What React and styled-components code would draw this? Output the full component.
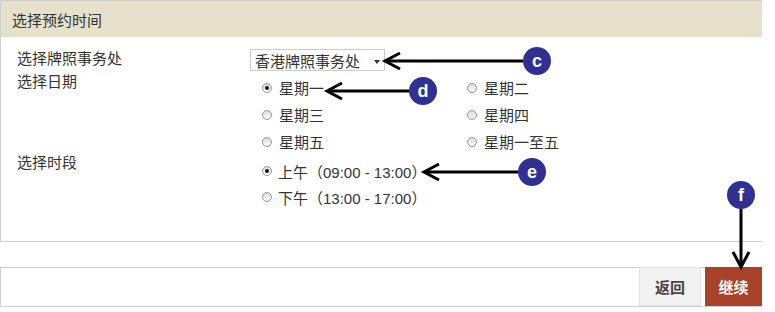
import React, { useState } from 'react';
import styled, { createGlobalStyle } from 'styled-components';

const GlobalStyle = createGlobalStyle`
    html, body {
        margin: 0;
        padding: 0;
        background: #fff;
    }
    body {
        font-family: "Liberation Sans", "Noto Sans CJK SC", sans-serif;
        color: #333;
        font-size: 15px;
        text-spacing-trim: space-all;
    }
`;

const Page = styled.div`
    position: relative;
    width: 775px;
    height: 312px;
    overflow: hidden;
`;

const Panel = styled.section`
    width: 762px;
    box-sizing: border-box;
    border-left: 1px solid #cfcfcf;
    border-bottom: 1px solid #cfcfcf;
`;

const PanelHeader = styled.h2`
    margin: 0;
    height: 36px;
    border-top: 1px solid #cfcfcf;
    background: #e6e1cb;
    padding-left: 11px;
    display: flex;
    align-items: center;
    font-size: 15px;
    font-weight: normal;
    color: #333;
`;

const PanelBody = styled.div`
    padding: 12px 0 31px 16px;
`;

const Field = styled.div`
    display: flex;
    align-items: flex-start;
`;

const Label = styled.div`
    width: 233px;
    flex: none;
    line-height: 16px;
    padding-top: ${(p) => p.offset || 0}px;
`;

const Select = styled.div`
    width: 135px;
    height: 22px;
    box-sizing: border-box;
    border: 1px solid #cccccc;
    display: flex;
    align-items: center;
    padding-left: 4px;
    position: relative;
    &::after {
        content: '';
        position: absolute;
        right: 4px;
        top: 10px;
        border-left: 3px solid transparent;
        border-right: 3px solid transparent;
        border-top: 4px solid #333;
    }
`;

const Options = styled.div`
    display: grid;
    grid-template-columns: ${(p) => (p.cols === 2 ? '205px 205px' : 'auto')};
    grid-auto-rows: ${(p) => p.rowHeight}px;
    padding-top: ${(p) => p.offset || 0}px;
    padding-left: 12px;
`;

const Option = styled.label`
    display: flex;
    align-items: center;
    gap: ${(p) => p.gap || 7}px;
    cursor: pointer;
    white-space: nowrap;
`;

const Radio = styled.span`
    width: 10px;
    height: 10px;
    flex: none;
    box-sizing: border-box;
    border-radius: 50%;
    border: 1px solid #959595;
    background: linear-gradient(#dcdcdc, #fff);
    display: flex;
    align-items: center;
    justify-content: center;
    &::after {
        content: '';
        width: 4px;
        height: 4px;
        border-radius: 50%;
        background: ${(p) => (p.checked ? '#111' : 'transparent')};
    }
`;

const ActionBar = styled.div`
    margin-top: 25px;
    width: 762px;
    height: 40px;
    box-sizing: border-box;
    border: 1px solid #cfcfcf;
    border-right: none;
    display: flex;
    justify-content: flex-end;
    gap: 4px;
`;

const Button = styled.button`
    width: ${(p) => p.width}px;
    height: 39px;
    margin-top: -1px;
    border: ${(p) => (p.primary ? 'none' : '1px solid #e2e2e2')};
    background: ${(p) => (p.primary ? '#a8432a' : '#f2f2f2')};
    color: ${(p) => (p.primary ? '#fff' : '#444')};
    font-family: "Liberation Sans", "Noto Sans CJK SC", sans-serif;
    font-size: 15px;
    font-weight: bold;
    padding: 0;
    cursor: pointer;
`;

const Overlay = styled.svg`
    position: absolute;
    left: 0;
    top: 0;
    pointer-events: none;
`;

const days = ['星期一', '星期二', '星期三', '星期四', '星期五', '星期一至五'];
const slots = ['上午（09:00 - 13:00）', '下午（13:00 - 17:00）'];

const marks = [
    { id: 'c', cx: 537, cy: 61, dir: 'left', tip: 385 },
    { id: 'd', cx: 423, cy: 91, dir: 'left', tip: 327 },
    { id: 'e', cx: 532, cy: 172, dir: 'left', tip: 424 },
    { id: 'f', cx: 741, cy: 195, dir: 'down', tip: 267 },
];

const Callout = ({ m }) => {
    const r = 14;
    let line, head;
    if (m.dir === 'left') {
        line = `M${m.cx - r} ${m.cy} L${m.tip + 2} ${m.cy}`;
        head = `M${m.tip + 15} ${m.cy - 8} L${m.tip} ${m.cy} L${m.tip + 15} ${m.cy + 8}`;
    } else {
        line = `M${m.cx} ${m.cy + r} L${m.cx} ${m.tip - 2}`;
        head = `M${m.cx - 8} ${m.tip - 15} L${m.cx} ${m.tip} L${m.cx + 8} ${m.tip - 15}`;
    }
    return (
        <g>
            <path d={line} stroke="#000" strokeWidth="3" fill="none" />
            <path d={head} stroke="#000" strokeWidth="3" fill="none" />
            <circle cx={m.cx} cy={m.cy} r={r} fill="#2e3192" />
            <text
                x={m.cx}
                y={m.cy + 6}
                textAnchor="middle"
                fill="#fff"
                fontSize="18"
                fontWeight="bold"
                fontFamily="Liberation Sans, sans-serif"
            >
                {m.id}
            </text>
        </g>
    );
};

const App = () => {
    const [day, setDay] = useState(0);
    const [slot, setSlot] = useState(0);
    return (
        <Page>
            <GlobalStyle />
            <Panel>
                <PanelHeader>选择预约时间</PanelHeader>
                <PanelBody>
                    <Field>
                        <Label offset={2}>选择牌照事务处</Label>
                        <Select>香港牌照事务处</Select>
                    </Field>
                    <Field>
                        <Label offset={3}>选择日期</Label>
                        <Options cols={2} rowHeight={27} offset={3}>
                            {days.map((d, i) => (
                                <Option key={d} onClick={() => setDay(i)}>
                                    <Radio checked={day === i} />
                                    {d}
                                </Option>
                            ))}
                        </Options>
                    </Field>
                    <Field>
                        <Label>选择时段</Label>
                        <Options rowHeight={26} offset={3}>
                            {slots.map((s, i) => (
                                <Option key={s} gap={6} onClick={() => setSlot(i)}>
                                    <Radio checked={slot === i} />
                                    {s}
                                </Option>
                            ))}
                        </Options>
                    </Field>
                </PanelBody>
            </Panel>
            <ActionBar>
                <Button width={62}>返回</Button>
                <Button width={57} primary>继续</Button>
            </ActionBar>
            <Overlay width="775" height="312">
                {marks.map((m) => (
                    <Callout key={m.id} m={m} />
                ))}
            </Overlay>
        </Page>
    );
};

export default App;
